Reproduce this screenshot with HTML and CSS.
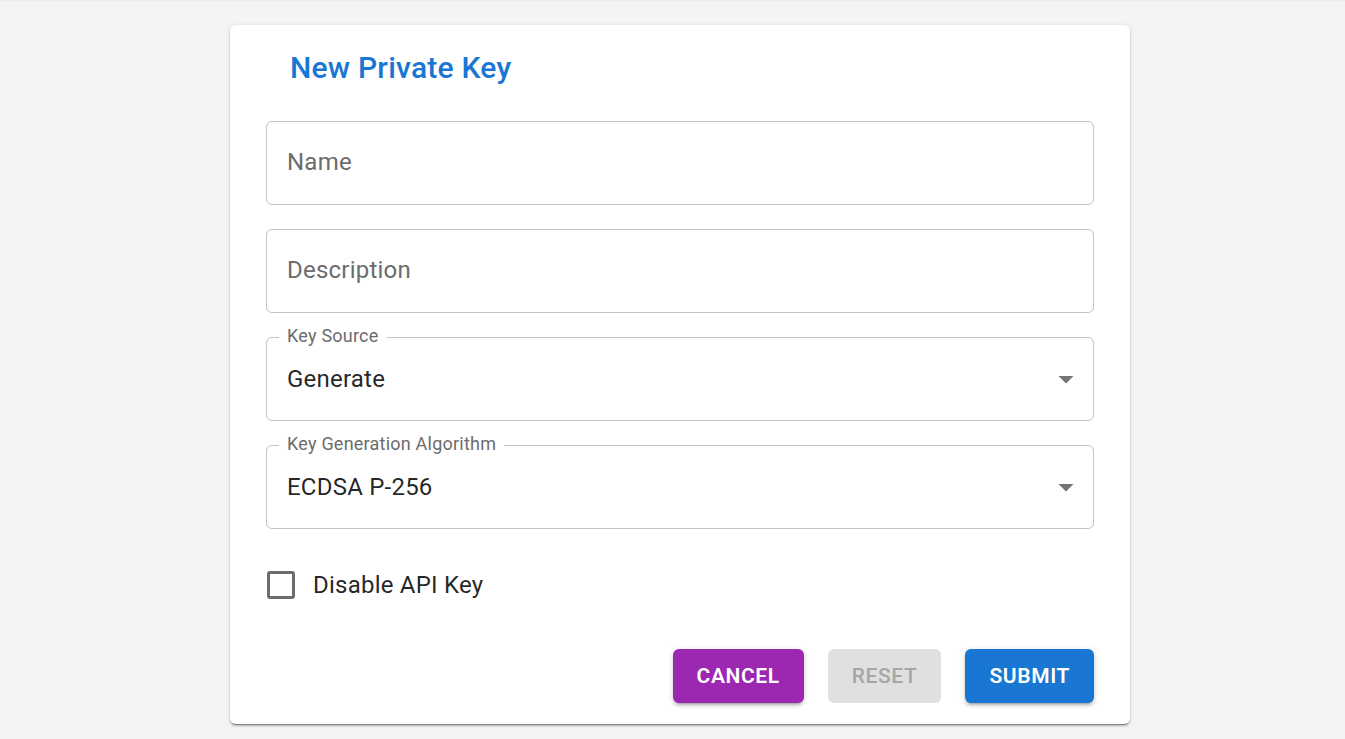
FILE: index.html
```html
<!DOCTYPE html>
<html lang="en">
<head>
<meta charset="utf-8">
<meta name="viewport" content="width=device-width, initial-scale=1">
<title>New Private Key</title>
<link rel="stylesheet" href="styles.css">
</head>
<body>
<main class="page">
  <form class="card">
    <h1 class="card-title">New Private Key</h1>
    <div class="fields">
      <div class="field">
        <input class="control" type="text" id="name">
        <label class="label" for="name">Name</label>
      </div>
      <div class="field">
        <input class="control" type="text" id="description">
        <label class="label" for="description">Description</label>
      </div>
      <div class="field">
        <select class="control" id="source"><option>Generate</option></select>
        <label class="label label-raised" for="source">Key Source</label>
        <svg class="arrow" viewBox="0 0 24 24" aria-hidden="true"><path d="M7 10l5 5 5-5z"/></svg>
      </div>
      <div class="field">
        <select class="control" id="algorithm"><option>ECDSA P-256</option></select>
        <label class="label label-raised" for="algorithm">Key Generation Algorithm</label>
        <svg class="arrow" viewBox="0 0 24 24" aria-hidden="true"><path d="M7 10l5 5 5-5z"/></svg>
      </div>
    </div>
    <label class="check"><input class="check-box" type="checkbox">Disable API Key</label>
    <div class="actions">
      <button class="button button-secondary" type="button">CANCEL</button>
      <button class="button" type="reset" disabled>RESET</button>
      <button class="button button-primary" type="submit">SUBMIT</button>
    </div>
  </form>
</main>
</body>
</html>
```
FILE: styles.css
```css
* {
  box-sizing: border-box;
}

body {
  margin: 0;
  min-height: 100vh;
  background: #f4f4f4;
  box-shadow: inset 0 2px 2px -1px rgba(0, 0, 0, 0.05);
  color: rgba(0, 0, 0, 0.87);
  font-family: Roboto, "Liberation Sans", sans-serif;
  font-size: 24px;
  letter-spacing: 0.00938em;
}

.page {
  padding: 25px 24px 15px 39px;
}

.card {
  max-width: 900px;
  margin: 0 auto;
  padding: 19px 36px 21px;
  border-radius: 6px;
  background: #fff;
  box-shadow: 0 3px 1px -2px rgba(0, 0, 0, 0.3), 0 2px 2px rgba(0, 0, 0, 0.2), 0 1px 5px rgba(0, 0, 0, 0.12);
}

.card-title {
  margin: 0 24px 29px;
  color: #1976d2;
  font-size: 30px;
  font-weight: 500;
  line-height: 48px;
  letter-spacing: 0.0075em;
}

.fields {
  display: grid;
  gap: 24px;
}

.field {
  position: relative;
}

.control {
  display: block;
  width: 100%;
  height: 84px;
  padding: 0 48px 0 20px;
  border: 1px solid #c4c4c4;
  border-radius: 6px;
  background: transparent;
  color: inherit;
  font: inherit;
  letter-spacing: inherit;
  appearance: none;
}

.label {
  position: absolute;
  top: 24px;
  left: 21px;
  color: #6c6c6c;
  line-height: 34px;
  pointer-events: none;
}

.label-raised {
  top: -14px;
  left: 13px;
  padding: 0 8px;
  background: #fff;
  font-size: 18px;
  line-height: 26px;
}

.arrow {
  position: absolute;
  top: 24px;
  right: 10px;
  width: 36px;
  height: 36px;
  fill: #757575;
  pointer-events: none;
}

.check {
  display: flex;
  align-items: center;
  gap: 18px;
  width: fit-content;
  margin: 38px 0 0 1px;
  line-height: 36px;
}

.check-box {
  width: 28px;
  height: 28px;
  margin: 0;
  border: 3px solid #6c6c6c;
  border-radius: 3px;
  appearance: none;
}

.check-box:checked {
  background: #1976d2;
}

.actions {
  display: flex;
  flex-wrap: wrap;
  justify-content: flex-end;
  gap: 24px;
  margin-top: 46px;
}

.button {
  padding: 9px 24px;
  border: 0;
  border-radius: 6px;
  background: #e0e0e0;
  color: #a6a6a6;
  font: inherit;
  font-size: 21px;
  font-weight: 500;
  line-height: 36px;
  letter-spacing: 0.02857em;
}

.button-primary,
.button-secondary {
  color: #fff;
  font-weight: 600;
  box-shadow: 0 4px 2px -3px rgba(0, 0, 0, 0.2), 0 3px 3px rgba(0, 0, 0, 0.14), 0 1px 7px rgba(0, 0, 0, 0.12);
}

.button-primary {
  background: #1976d2;
}

.button-secondary {
  background: #9c27b0;
}
```
